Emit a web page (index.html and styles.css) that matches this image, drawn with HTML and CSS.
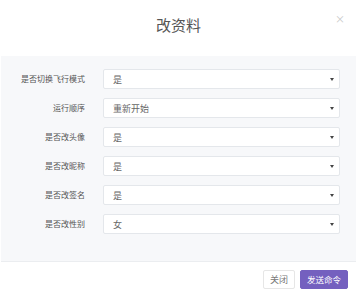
FILE: index.html
```html
<!DOCTYPE html>
<html lang="zh">
<head>
    <meta charset="UTF-8">
    <meta name="viewport" content="width=device-width, initial-scale=1.0">
    <title>改资料</title>
    <link rel="stylesheet" href="styles.css">
</head>
<body>

    <div class="modal">
        <div class="modal-header">
            <h2>改资料</h2>
            <span class="close">&times;</span>
        </div>

        <form class="modal-body">
            <div class="row">
                <label>是否切换飞行模式</label>
                <div class="select-box">
                    <select><option>是</option><option>否</option></select>
                </div>
            </div>
            <div class="row">
                <label>运行顺序</label>
                <div class="select-box">
                    <select><option>重新开始</option><option>继续</option></select>
                </div>
            </div>
            <div class="row">
                <label>是否改头像</label>
                <div class="select-box">
                    <select><option>是</option><option>否</option></select>
                </div>
            </div>
            <div class="row">
                <label>是否改昵称</label>
                <div class="select-box">
                    <select><option>是</option><option>否</option></select>
                </div>
            </div>
            <div class="row">
                <label>是否改签名</label>
                <div class="select-box">
                    <select><option>是</option><option>否</option></select>
                </div>
            </div>
            <div class="row">
                <label>是否改性别</label>
                <div class="select-box">
                    <select><option>女</option><option>男</option></select>
                </div>
            </div>
        </form>

        <div class="modal-footer">
            <button class="btn btn-default">关闭</button>
            <button class="btn btn-primary">发送命令</button>
        </div>
    </div>

</body>
</html>
```

FILE: styles.css
```css
/* General Styles */
body {
    margin: 0;
    padding: 0;
    background-color: #fff;
    font-family: "Noto Sans CJK SC", "Noto Sans", sans-serif;
    color: #555;
}

.modal {
    width: 357px;
    height: 294px;
    box-sizing: border-box;
    padding: 0 1px;
    overflow: hidden;
}

.modal-header {
    position: relative;
    height: 56px;
    display: flex;
    justify-content: center;
    align-items: center;
}

.modal-header h2 {
    margin: 0 0 8px 0;
    font-size: 15px;
    line-height: 1;
    font-weight: normal;
    color: #555;
}

.close {
    position: absolute;
    right: 11px;
    top: 14px;
    font-size: 10px;
    line-height: 1;
    color: #c8c8c8;
}

.modal-body {
    margin: 0;
    background-color: #f7f8fa;
    border-bottom: 1px solid #ebedf0;
    padding: 13px 0 27px 0;
    display: flex;
    flex-direction: column;
    gap: 9px;
}

.row {
    display: flex;
    align-items: center;
    height: 20px;
}

.row label {
    width: 84px;
    text-align: right;
    margin-right: 18px;
    font-size: 8px;
    line-height: 1;
    color: #555;
}

.select-box {
    position: relative;
    width: 237px;
    height: 20px;
}

.select-box select {
    appearance: none;
    -webkit-appearance: none;
    display: block;
    box-sizing: border-box;
    width: 100%;
    height: 20px;
    margin: 0;
    padding: 0 0 0 9px;
    border: 1px solid #e4e7eb;
    border-radius: 2px;
    background-color: #fff;
    font-family: inherit;
    font-size: 9px;
    line-height: 1;
    color: #666;
    outline: none;
}

.select-box::after {
    content: "";
    position: absolute;
    right: 6px;
    top: 9px;
    border-left: 2px solid transparent;
    border-right: 2px solid transparent;
    border-top: 3px solid #444;
}

.modal-footer {
    display: flex;
    justify-content: flex-end;
    gap: 5px;
    padding: 8px 8px 0 0;
}

.btn {
    box-sizing: border-box;
    height: 19px;
    padding: 0 6px;
    border-radius: 2px;
    font-family: inherit;
    font-size: 9px;
    line-height: 1;
    cursor: pointer;
}

.btn-default {
    background-color: #fff;
    border: 1px solid #e6e6e6;
    color: #777;
}

.btn-primary {
    background-color: #7460bf;
    border: 1px solid #7460bf;
    color: #fff;
    padding: 0 6px;
    font-size: 8.5px;
}
```
